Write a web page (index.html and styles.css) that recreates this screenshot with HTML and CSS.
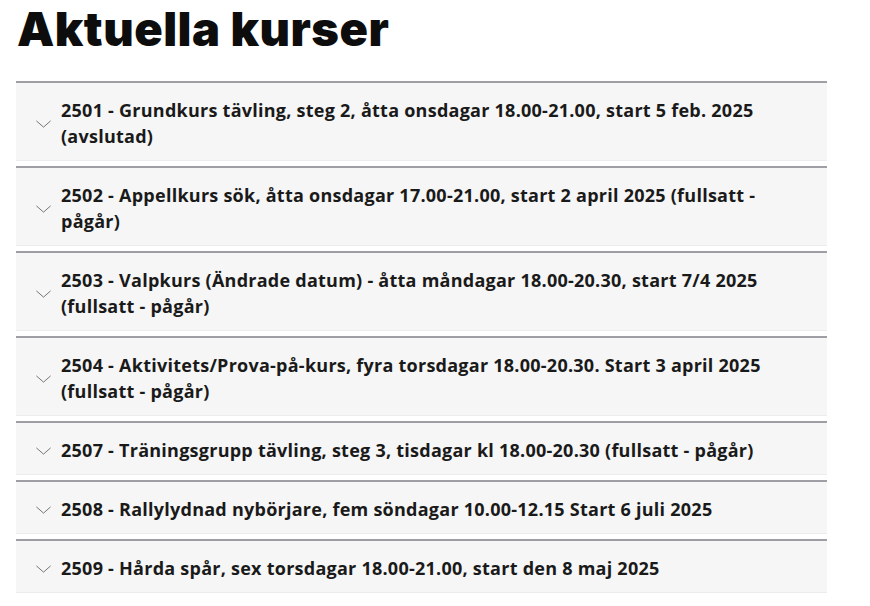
FILE: index.html
```html
<!DOCTYPE html>
<html lang="sv">

<head>
    <meta charset="UTF-8" />
    <title>Aktuella kurser</title>
    <link rel="stylesheet" href="styles.css">
</head>

<body>
    <main class="kurser">
        <h1>Aktuella kurser</h1>
        <div class="accordion">
            <div class="accordion-item">
                <svg class="chevron" viewBox="0 0 18 9"><path d="M1 1l8 7 8-7" /></svg>
                <span class="title">2501 - Grundkurs tävling, steg 2, åtta onsdagar 18.00-21.00, start 5 feb. 2025 (avslutad)</span>
            </div>
            <div class="accordion-item">
                <svg class="chevron" viewBox="0 0 18 9"><path d="M1 1l8 7 8-7" /></svg>
                <span class="title">2502 - Appellkurs sök, åtta onsdagar 17.00-21.00, start 2 april 2025 (fullsatt - pågår)</span>
            </div>
            <div class="accordion-item">
                <svg class="chevron" viewBox="0 0 18 9"><path d="M1 1l8 7 8-7" /></svg>
                <span class="title">2503 - Valpkurs (Ändrade datum) - åtta måndagar 18.00-20.30, start 7/4 2025 (fullsatt - pågår)</span>
            </div>
            <div class="accordion-item">
                <svg class="chevron" viewBox="0 0 18 9"><path d="M1 1l8 7 8-7" /></svg>
                <span class="title">2504 - Aktivitets/Prova-på-kurs, fyra torsdagar 18.00-20.30. Start 3 april 2025 (fullsatt - pågår)</span>
            </div>
            <div class="accordion-item">
                <svg class="chevron" viewBox="0 0 18 9"><path d="M1 1l8 7 8-7" /></svg>
                <span class="title">2507 - Träningsgrupp tävling, steg 3, tisdagar kl 18.00-20.30 (fullsatt - pågår)</span>
            </div>
            <div class="accordion-item">
                <svg class="chevron" viewBox="0 0 18 9"><path d="M1 1l8 7 8-7" /></svg>
                <span class="title">2508 - Rallylydnad nybörjare, fem söndagar 10.00-12.15 Start 6 juli 2025</span>
            </div>
            <div class="accordion-item">
                <svg class="chevron" viewBox="0 0 18 9"><path d="M1 1l8 7 8-7" /></svg>
                <span class="title">2509 - Hårda spår, sex torsdagar 18.00-21.00, start den 8 maj 2025</span>
            </div>
        </div>
    </main>
</body>
</html>
```

FILE: styles.css
```css
body {
    margin: 0;
    font-family: "Open Sans", Arial, sans-serif;
    color: #1a1a1a;
    background: #fff;
}

.kurser {
    width: 811px;
    padding: 0 0 0 16px;
}

h1 {
    font-family: Inter, "Open Sans", sans-serif;
    font-weight: 900;
    font-size: 47px;
    letter-spacing: 0.5px;
    line-height: 57px;
    margin: 0 0 0 1px;
    height: 81px;
    color: #0d0d0d;
}

.accordion {
    display: flex;
    flex-direction: column;
    gap: 5px;
}

.accordion-item {
    display: flex;
    align-items: center;
    gap: 9px;
    background: #f6f6f6;
    border-top: 2px solid #9e9ea4;
    border-bottom: 1px solid #ececec;
    padding: 14px 40px 11px 19px;
}

.chevron {
    flex: none;
    width: 17px;
    height: 8px;
    margin-top: 2px;
    fill: none;
    stroke: #666;
    stroke-width: 1;
}

.title {
    font-size: 18px;
    font-weight: 700;
    letter-spacing: 0.25px;
    line-height: 26px;
}
```
